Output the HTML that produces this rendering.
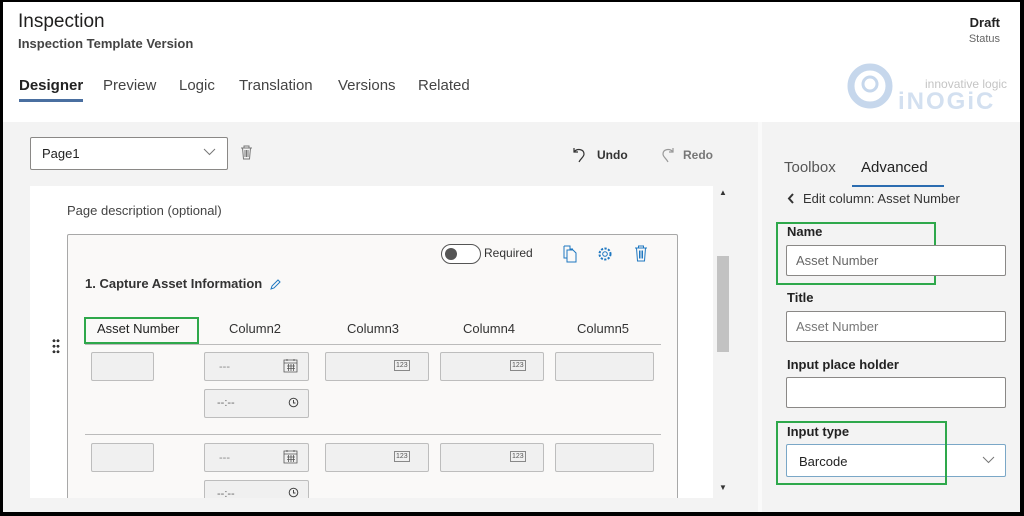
<!DOCTYPE html><html><head><meta charset="utf-8"><style>
*{box-sizing:border-box;margin:0;padding:0}
body{width:1024px;height:516px;background:#000;position:relative;overflow:hidden;font-family:"Liberation Sans",sans-serif;color:#323130}
.a{position:absolute}
.t{position:absolute;white-space:nowrap}
.in{position:absolute;background:#f0f0f0;border:1px solid #bdbdbd;border-radius:2px}
.w{position:absolute;background:#fff;border:1px solid #8a8886;border-radius:2px}
.b123{position:absolute;font-size:7px;border:1px solid #888;padding:0 1px;color:#555;line-height:9px}
.gb{position:absolute;border:2px solid #2ea84b}
</style></head><body>
<div class="a" style="left:3px;top:2px;width:1017px;height:120px;background:#fff"></div>
<div class="a" style="left:3px;top:122px;width:1017px;height:390px;background:#f3f3f3"></div>
<div class="t" style="left:18px;top:11px;font-size:19px;color:#201f1e">Inspection</div>
<div class="t" style="left:18px;top:36px;font-size:13px;font-weight:bold;color:#444">Inspection Template Version</div>
<div class="t" style="left:19px;top:77px;font-size:15px;font-weight:bold;color:#222">Designer</div>
<div class="a" style="left:19px;top:99px;width:64px;height:3px;background:#4a6fa0"></div>
<div class="t" style="left:103px;top:77px;font-size:15px;color:#444">Preview</div>
<div class="t" style="left:179px;top:77px;font-size:15px;color:#444">Logic</div>
<div class="t" style="left:239px;top:77px;font-size:15px;color:#444">Translation</div>
<div class="t" style="left:338px;top:77px;font-size:15px;color:#444">Versions</div>
<div class="t" style="left:418px;top:77px;font-size:15px;color:#444">Related</div>
<div class="t" style="right:24px;top:15px;font-size:13px;font-weight:bold;color:#222">Draft</div>
<div class="t" style="right:24px;top:33px;font-size:11px;color:#666">Status</div>
<svg class="a" style="left:846px;top:62px" width="48" height="48"><circle cx="24" cy="24" r="19" fill="none" stroke="#c6d7ec" stroke-width="7"/><circle cx="24" cy="22" r="7" fill="none" stroke="#c6d7ec" stroke-width="3"/></svg>
<div class="t" style="left:925px;top:77px;font-size:12px;color:#c4c4c4">innovative logic</div>
<div class="t" style="left:898px;top:88px;font-size:24px;font-weight:bold;color:#d3e0f0;letter-spacing:2px">iNOGiC</div>
<div class="w" style="left:30px;top:137px;width:198px;height:33px"></div>
<div class="t" style="left:42px;top:146px;font-size:13px;color:#222">Page1</div>
<svg class="a" style="left:203px;top:148px" width="13" height="8"><path d="M1 1l5.5 5.5L12 1" stroke="#777" fill="none"/></svg>
<svg class="a" style="left:240px;top:145px" width="13" height="15"><path d="M1 3h11M4 3V1h5v2M2.5 3l1 11h6l1-11M5 5v7M6.5 5v7M8 5v7" stroke="#777" fill="none"/></svg>
<svg class="a" style="left:572px;top:146px" width="16" height="18"><path d="M2 2v4h4M2 6c3-4 10-3 10 2 0 3-3 4-5 8" stroke="#333" fill="none" stroke-width="1.2"/></svg>
<div class="t" style="left:597px;top:148px;font-size:12px;font-weight:bold;color:#333">Undo</div>
<svg class="a" style="left:659px;top:146px" width="16" height="18"><path d="M14 2v4h-4M14 6c-3-4-10-3-10 2 0 3 3 4 5 8" stroke="#999" fill="none" stroke-width="1.2"/></svg>
<div class="t" style="left:683px;top:148px;font-size:12px;font-weight:bold;color:#777">Redo</div>
<div class="a" style="left:30px;top:186px;width:683px;height:312px;background:#fff"></div>
<div class="a" style="left:714px;top:186px;width:16px;height:312px;background:#f3f3f3"></div>
<div class="t" style="left:719px;top:188px;font-size:8px;color:#333">&#9650;</div>
<div class="a" style="left:717px;top:256px;width:12px;height:96px;background:#c2c2c2"></div>
<div class="t" style="left:719px;top:483px;font-size:8px;color:#333">&#9660;</div>
<div class="t" style="left:67px;top:203px;font-size:13px;color:#444">Page description (optional)</div>
<div class="a" style="left:52px;top:338px;width:8px;height:16px;background:radial-gradient(circle,#333 1.3px,transparent 1.6px) 0 0/4px 5.5px"></div>
<div class="a" style="left:67px;top:234px;width:611px;height:270px;background:#faf9f8;border:1px solid #a8a8a8;border-radius:2px"></div>
<div class="a" style="left:441px;top:244px;width:40px;height:20px;border:1px solid #555;border-radius:10px;background:#fff"></div>
<div class="a" style="left:445px;top:248px;width:12px;height:12px;border-radius:6px;background:#555"></div>
<div class="t" style="left:484px;top:246px;font-size:12px;color:#333">Required</div>
<svg class="a" style="left:562px;top:245px" width="16" height="18"><path d="M2 1h6v3h3M2 1v12h3M5 5h6l3 3v9H5z" stroke="#1f78c1" fill="none"/></svg>
<svg class="a" style="left:597px;top:246px" width="16" height="16"><circle cx="8" cy="8" r="5.5" fill="none" stroke="#1f78c1" stroke-dasharray="2.2 1.4" stroke-width="2"/><circle cx="8" cy="8" r="2.3" fill="none" stroke="#1f78c1"/></svg>
<svg class="a" style="left:634px;top:245px" width="14" height="17"><path d="M1 3h12M4.5 3V1h5v2M2.5 3l1 13h7l1-13M5.5 5.5v8M7 5.5v8M8.5 5.5v8" stroke="#1f78c1" fill="none"/></svg>
<div class="t" style="left:85px;top:276px;font-size:13px;font-weight:bold;color:#333">1. Capture Asset Information</div>
<svg class="a" style="left:269px;top:278px" width="13" height="13"><path d="M2 11l1-3 6-6 2 2-6 6z" stroke="#1f78c1" fill="none"/></svg>
<div class="gb" style="left:84px;top:317px;width:115px;height:27px"></div>
<div class="t" style="left:97px;top:321px;font-size:13px;color:#222">Asset Number</div>
<div class="t" style="left:229px;top:321px;font-size:13px;color:#333">Column2</div>
<div class="t" style="left:347px;top:321px;font-size:13px;color:#333">Column3</div>
<div class="t" style="left:463px;top:321px;font-size:13px;color:#333">Column4</div>
<div class="t" style="left:577px;top:321px;font-size:13px;color:#333">Column5</div>
<div class="a" style="left:85px;top:344px;width:576px;height:1px;background:#bbb"></div>
<div class="a" style="left:85px;top:434px;width:576px;height:1px;background:#bbb"></div>
<div class="in" style="left:91px;top:352px;width:63px;height:29px"></div>
<div class="in" style="left:204px;top:352px;width:105px;height:29px"></div>
<div class="t" style="left:219px;top:361px;font-size:11px;color:#888">---</div>
<svg class="a" style="left:283px;top:358px" width="15" height="15"><path d="M1 2h13v12H1zM1 5h13M4 1v2M11 1v2M4 8h8M4 10.5h8M5.5 6v7M8 6v7M10.5 6v7" stroke="#555" fill="none" stroke-width=".8"/></svg>
<div class="in" style="left:325px;top:352px;width:104px;height:29px"></div>
<div class="b123" style="left:394px;top:360px">123</div>
<div class="in" style="left:440px;top:352px;width:104px;height:29px"></div>
<div class="b123" style="left:510px;top:360px">123</div>
<div class="in" style="left:555px;top:352px;width:99px;height:29px"></div>
<div class="in" style="left:204px;top:389px;width:105px;height:29px"></div>
<div class="t" style="left:217px;top:397px;font-size:11px;color:#666">--:--</div>
<svg class="a" style="left:288px;top:397px" width="11" height="11"><circle cx="5.5" cy="5.5" r="4.3" fill="none" stroke="#444"/><path d="M5.5 3v3h2" stroke="#444" fill="none"/></svg>
<div class="in" style="left:91px;top:443px;width:63px;height:29px"></div>
<div class="in" style="left:204px;top:443px;width:105px;height:29px"></div>
<div class="t" style="left:219px;top:452px;font-size:11px;color:#888">---</div>
<svg class="a" style="left:283px;top:449px" width="15" height="15"><path d="M1 2h13v12H1zM1 5h13M4 1v2M11 1v2M4 8h8M4 10.5h8M5.5 6v7M8 6v7M10.5 6v7" stroke="#555" fill="none" stroke-width=".8"/></svg>
<div class="in" style="left:325px;top:443px;width:104px;height:29px"></div>
<div class="b123" style="left:394px;top:451px">123</div>
<div class="in" style="left:440px;top:443px;width:104px;height:29px"></div>
<div class="b123" style="left:510px;top:451px">123</div>
<div class="in" style="left:555px;top:443px;width:99px;height:29px"></div>
<div class="in" style="left:204px;top:480px;width:105px;height:29px"></div>
<div class="t" style="left:217px;top:488px;font-size:11px;color:#666">--:--</div>
<svg class="a" style="left:288px;top:487px" width="11" height="11"><circle cx="5.5" cy="5.5" r="4.3" fill="none" stroke="#444"/><path d="M5.5 3v3h2" stroke="#444" fill="none"/></svg>
<div class="a" style="left:3px;top:498px;width:755px;height:14px;background:#f3f3f3"></div>
<div class="a" style="left:758px;top:122px;width:4px;height:390px;background:#fafafa"></div>
<div class="t" style="left:784px;top:159px;font-size:15px;color:#555">Toolbox</div>
<div class="t" style="left:861px;top:159px;font-size:15px;color:#222">Advanced</div>
<div class="a" style="left:852px;top:185px;width:92px;height:2px;background:#2b6cb0"></div>
<svg class="a" style="left:787px;top:193px" width="8" height="11"><path d="M6 1L2 5.5 6 10" stroke="#333" stroke-width="2" fill="none"/></svg>
<div class="t" style="left:803px;top:191px;font-size:13px;color:#333">Edit column: Asset Number</div>
<div class="gb" style="left:776px;top:222px;width:160px;height:63px"></div>
<div class="t" style="left:787px;top:224px;font-size:13px;font-weight:bold;color:#222">Name</div>
<div class="w" style="left:786px;top:245px;width:220px;height:31px"></div>
<div class="t" style="left:796px;top:253px;font-size:13px;color:#666">Asset Number</div>
<div class="t" style="left:787px;top:290px;font-size:13px;font-weight:bold;color:#222">Title</div>
<div class="w" style="left:786px;top:311px;width:220px;height:31px"></div>
<div class="t" style="left:796px;top:319px;font-size:13px;color:#777">Asset Number</div>
<div class="t" style="left:787px;top:357px;font-size:13px;font-weight:bold;color:#222">Input place holder</div>
<div class="w" style="left:786px;top:377px;width:220px;height:31px"></div>
<div class="t" style="left:787px;top:424px;font-size:13px;font-weight:bold;color:#222">Input type</div>
<div class="w" style="left:786px;top:444px;width:220px;height:33px;border-color:#7aa7c7"></div>
<div class="t" style="left:799px;top:454px;font-size:13px;color:#222">Barcode</div>
<svg class="a" style="left:982px;top:456px" width="13" height="8"><path d="M1 1l5.5 5.5L12 1" stroke="#777" fill="none"/></svg>
<div class="gb" style="left:776px;top:421px;width:171px;height:64px"></div>
</body></html>
